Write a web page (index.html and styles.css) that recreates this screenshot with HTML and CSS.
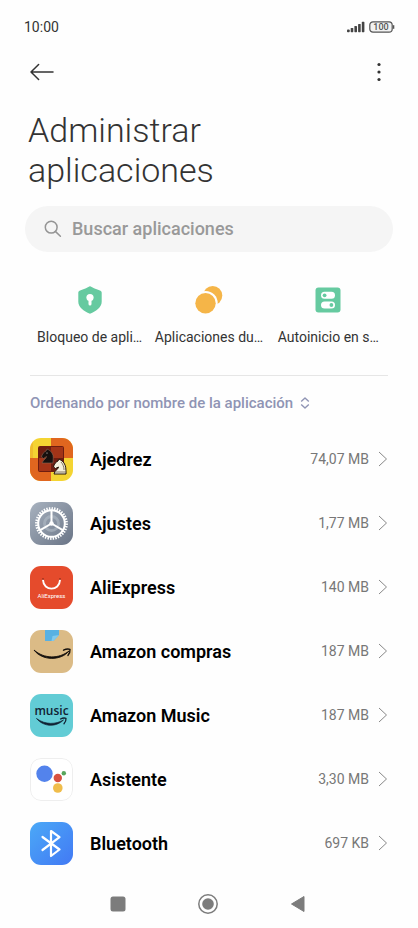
FILE: index.html
```html
<!DOCTYPE html>
<html lang="es">
<head>
<meta charset="utf-8">
<meta name="viewport" content="width=device-width, initial-scale=1">
<title>Administrar aplicaciones</title>
<link rel="stylesheet" href="styles.css">
</head>
<body>
<div class="screen">
  <div class="status">
    <time>10:00</time>
    <div class="status-icons">
      <svg width="18" height="12" viewBox="0 0 18 12" fill="#444" aria-hidden="true"><rect x="0" y="8.5" width="2.700" height="2.700" rx=".8"/><rect x="3.700" y="7" width="2.600" height="4.200" rx=".6"/><rect x="7.400" y="5" width="2.600" height="6.200" rx=".6"/><rect x="11.100" y="3" width="2.600" height="8.200" rx=".6"/><rect x="14.800" y=".8" width="2.600" height="10.400" rx=".6"/></svg>
      <svg width="26" height="12" viewBox="0 0 26 12" aria-hidden="true"><rect x=".8" y=".8" width="22.400" height="10.400" rx="3.200" fill="#f2f2f2" stroke="#555" stroke-width="1.200"/><path d="M24.600 4.200v3.600" stroke="#555" stroke-width="1.400"/><text class="charge" x="12" y="9.200" text-anchor="middle">100</text></svg>
    </div>
  </div>

  <header class="toolbar">
    <button type="button" aria-label="Atrás"><svg width="24" height="18" viewBox="0 0 24 18" fill="none" stroke="#333" stroke-width="1.500" stroke-linecap="round" stroke-linejoin="round"><path d="M23 9H1M8.600 1.500 1 9l7.600 7.500"/></svg></button>
    <button type="button" aria-label="Más opciones"><svg width="4" height="20" viewBox="0 0 4 20" fill="#333"><circle cx="2" cy="2.500" r="1.600"/><circle cx="2" cy="10" r="1.600"/><circle cx="2" cy="17.500" r="1.600"/></svg></button>
  </header>

  <main>
    <h1>Administrar aplicaciones</h1>

    <label class="search">
      <svg width="18" height="18" viewBox="0 0 18 18" fill="none" stroke="#959595" stroke-width="1.500" stroke-linecap="round" aria-hidden="true"><circle cx="7.200" cy="7.200" r="5.900"/><path d="m11.600 11.600 4.800 4.600"/></svg>
      <input type="search" placeholder="Buscar aplicaciones" aria-label="Buscar aplicaciones">
    </label>

    <nav class="shortcuts">
      <a href="#"><svg width="28" height="28" viewBox="0 0 28 28"><path d="M14 .3c1 0 2 1 4 2l6 2.200c1.200.500 1.700 1.100 1.700 2.300v9c0 5.500-5.300 9.300-11.700 12-6.400-2.700-11.700-6.500-11.700-12v-9c0-1.200.5-1.800 1.700-2.300l6-2.200c2-1 3-2 4-2z" fill="#66caa0"/><circle cx="14" cy="11.500" r="3.600" fill="#fff"/><path d="M14 12v6" stroke="#fff" stroke-width="3" stroke-linecap="round"/></svg><span>Bloqueo de apli…</span></a>
      <a href="#"><svg width="28" height="28" viewBox="0 0 28 28"><circle cx="17.700" cy="9.600" r="9.600" fill="#f5b548"/><circle cx="10.700" cy="17" r="12" fill="#fefefe"/><circle cx="10.500" cy="17.200" r="10.200" fill="#f5b548"/></svg><span>Aplicaciones du…</span></a>
      <a href="#"><svg width="28" height="28" viewBox="0 0 28 28"><rect x="1.500" y="1.500" width="25" height="25" rx="3" fill="#66caa0"/><rect x="7" y="5.800" width="14" height="7" rx="3.500" fill="#fff"/><rect x="7" y="15.500" width="14" height="7" rx="3.500" fill="#fff"/><circle cx="10.600" cy="9.300" r="1.900" fill="#66caa0"/><circle cx="17.400" cy="19" r="1.900" fill="#66caa0"/></svg><span>Autoinicio en s…</span></a>
    </nav>

    <button type="button" class="sort">Ordenando por nombre de la aplicación <svg width="10" height="12" viewBox="0 0 10 12" fill="none" stroke="#8f94b4" stroke-width="1.400" stroke-linejoin="round" aria-hidden="true"><path d="M1.200 4.500 5 1l3.800 3.500M1.200 7.500 5 11l3.800-3.500"/></svg></button>

    <ul class="apps">
      <li><a href="#">
        <svg class="icon" viewBox="0 0 43 43" aria-hidden="true"><path fill="#f4d432" d="M0 0h43v43H0z"/><path fill="#e0661f" d="M21 0h22v20H21zM0 20h21v23H0z"/><path fill="#e0661f" d="M0 0h3v20H0z" opacity=".2"/><rect x="8" y="8" width="26" height="26" rx="2" fill="#6e1d10"/><path fill="#a33418" d="M21 9h12v11H21zM9 20h12v13H9z"/><path d="M12 25h11c0-4 1-7-1-10-1-2-3-3-5-4l-1 2c-2 1-4 3-4.500 6l2 1.500 3-2c0 2-3 3-4.500 6.500z" fill="#17100e" stroke="#8b6955" stroke-width=".6"/><circle cx="17" cy="15" r=".6" fill="#ddd"/><path d="M24 36h12c0-5 0-8-2-11-1-2-3-2.500-5-4l-1 2c-2 1-4 3-4.500 6l2 1.500 3-1.500c0 2-4 3.500-4.500 7z" fill="#f4efdc" stroke="#24150b" stroke-width="1"/><path d="M25 34h10M31 24c2 2 3 5 3 8" stroke="#6a5b43" stroke-width=".8" fill="none"/></svg>
        <span class="name">Ajedrez</span><span class="size">74,07 MB</span>
        <svg class="chevron" viewBox="0 0 10 16"><path d="m1 1 7.500 7L1 15"/></svg></a></li>
      <li><a href="#">
        <svg class="icon" viewBox="0 0 43 43" aria-hidden="true"><defs><linearGradient id="steel" x2="1" y2="1"><stop stop-color="#a8b2bf"/><stop offset="1" stop-color="#697486"/></linearGradient></defs><path fill="url(#steel)" d="M0 0h43v43H0z"/><circle cx="21.500" cy="21.500" r="7" fill="none" stroke="#b8c1cc" stroke-width="3" opacity=".5"/><g fill="none" stroke="#fff"><circle cx="21.500" cy="21.500" r="13.300" stroke-width="2"/><circle cx="21.500" cy="21.500" r="15" stroke-width="2.800" pathLength="72" stroke-dasharray="1.100 .9"/><path d="M21.500 21.500V8M21.500 21.500l-11.700 6.800M21.500 21.500l11.700 6.800" stroke-width="2"/></g><circle cx="21.500" cy="21.500" r="2.200" fill="#fff"/></svg>
        <span class="name">Ajustes</span><span class="size">1,77 MB</span>
        <svg class="chevron" viewBox="0 0 10 16"><path d="m1 1 7.500 7L1 15"/></svg></a></li>
      <li><a href="#">
        <svg class="icon" viewBox="0 0 43 43" aria-hidden="true"><path fill="#e54b2c" d="M0 0h43v43H0z"/><path d="M13 14c.5 11.500 16.500 11.500 17 0" fill="none" stroke="#fff" stroke-width="1.900" stroke-linecap="round"/><circle cx="13" cy="13" r="1.100" fill="#a9321c"/><circle cx="30" cy="13" r="1.100" fill="#a9321c"/><text class="ali" x="21.500" y="31.500" text-anchor="middle">AliExpress</text></svg>
        <span class="name">AliExpress</span><span class="size">140 MB</span>
        <svg class="chevron" viewBox="0 0 10 16"><path d="m1 1 7.500 7L1 15"/></svg></a></li>
      <li><a href="#">
        <svg class="icon" viewBox="0 0 43 43" aria-hidden="true"><path fill="#dbbb86" d="M0 0h43v43H0z"/><path fill="#59b1e2" d="M15 0h14v5l-5.500 6H15z"/><path fill="#83caed" d="m21.500 11 1-5 6.500-1-5.500 6z"/><path d="M4 20c10 9 25 9 35 1-8 10-27 10-35-1z" fill="#15110d" stroke="#15110d" stroke-width=".9" stroke-linejoin="round"/><path d="M33.500 20.200c2.500-1.200 5-1.300 6.500-.8.200 2-.7 4.300-2 6" fill="none" stroke="#15110d" stroke-width="1.400" stroke-linecap="round" stroke-linejoin="round"/></svg>
        <span class="name">Amazon compras</span><span class="size">187 MB</span>
        <svg class="chevron" viewBox="0 0 10 16"><path d="m1 1 7.500 7L1 15"/></svg></a></li>
      <li><a href="#">
        <svg class="icon" viewBox="0 0 43 43" aria-hidden="true"><path fill="#62ccd5" d="M0 0h43v43H0z"/><text class="music" x="21.500" y="21" text-anchor="middle">music</text><path d="M6.500 24.500c9 6.500 19 6 27 1.500-7 7-19.500 7.500-27-1.500z" fill="#123" stroke="#123" stroke-width=".7" stroke-linejoin="round"/><path d="M30.500 25c2-1 4-1.200 5.500-.7.200 2-.6 4-2 5.500" fill="none" stroke="#123" stroke-width="1.300" stroke-linecap="round" stroke-linejoin="round"/></svg>
        <span class="name">Amazon Music</span><span class="size">187 MB</span>
        <svg class="chevron" viewBox="0 0 10 16"><path d="m1 1 7.500 7L1 15"/></svg></a></li>
      <li><a href="#">
        <svg class="icon" viewBox="0 0 43 43" aria-hidden="true"><rect x=".5" y=".5" width="42" height="42" rx="10.500" fill="#fff" stroke="#eee"/><circle cx="14.500" cy="15.800" r="8.200" fill="#5383ec"/><circle cx="27.800" cy="20" r="4.200" fill="#d85140"/><circle cx="33.800" cy="15.300" r="2.200" fill="#58a65c"/><circle cx="27.800" cy="30" r="4.800" fill="#f0bd4b"/></svg>
        <span class="name">Asistente</span><span class="size">3,30 MB</span>
        <svg class="chevron" viewBox="0 0 10 16"><path d="m1 1 7.500 7L1 15"/></svg></a></li>
      <li><a href="#">
        <svg class="icon" viewBox="0 0 43 43" aria-hidden="true"><defs><linearGradient id="blue" x2="1" y2="1"><stop stop-color="#4ba9f7"/><stop offset="1" stop-color="#4279f4"/></linearGradient></defs><path fill="url(#blue)" d="M0 0h43v43H0z"/><path d="m12.500 15 17 12.500-8.500 6.500V9l8.500 6.200-17 12.800" fill="none" stroke="#fff" stroke-width="2.200" stroke-linecap="round" stroke-linejoin="round"/></svg>
        <span class="name">Bluetooth</span><span class="size">697 KB</span>
        <svg class="chevron" viewBox="0 0 10 16"><path d="m1 1 7.500 7L1 15"/></svg></a></li>
    </ul>
  </main>

  <footer class="system">
    <button type="button" aria-label="Recientes"><svg width="22" height="22" viewBox="0 0 22 22"><rect x="3.500" y="3.500" width="15" height="15" rx="2.500" fill="#7c7c7c"/></svg></button>
    <button type="button" aria-label="Inicio"><svg width="22" height="22" viewBox="0 0 22 22"><circle cx="11" cy="11" r="9.200" fill="none" stroke="#7c7c7c" stroke-width="1.500"/><circle cx="11" cy="11" r="5.800" fill="#7c7c7c"/></svg></button>
    <button type="button" aria-label="Volver"><svg width="22" height="22" viewBox="0 0 22 22"><path d="M17 3.500v15L4.500 11z" fill="#7c7c7c" stroke="#7c7c7c" stroke-linejoin="round"/></svg></button>
  </footer>
</div>
</body>
</html>
```
FILE: styles.css
```css
* { box-sizing: border-box; }

body {
  margin: 0;
  background: #fefefe;
  color: #333;
  font-family: Roboto, "Liberation Sans", sans-serif;
}

button {
  display: flex;
  align-items: center;
  padding: 0;
  border: 0;
  background: none;
  font: inherit;
}

a {
  color: inherit;
  text-decoration: none;
}

.screen {
  display: flex;
  flex-direction: column;
  min-height: 100vh;
}

.status {
  display: flex;
  justify-content: space-between;
  align-items: center;
  height: 54px;
  padding: 0 23px 0 24px;
  font-size: 14px;
}

.status-icons {
  display: flex;
  gap: 4px;
}

.charge {
  font-size: 9px;
  font-weight: 500;
  fill: #555;
}

.toolbar {
  display: flex;
  justify-content: space-between;
  height: 36px;
  padding: 0 37px 0 30px;
}

main { flex: 1; }

h1 {
  max-width: 300px;
  margin: 20px 28px 16px;
  font-size: 34px;
  font-weight: 300;
  line-height: 40px;
}

.search {
  display: flex;
  align-items: center;
  gap: 10px;
  height: 46px;
  margin: 0 25px;
  padding: 0 19px;
  border-radius: 23px;
  background: #f5f5f5;
}

.search input {
  flex: 1;
  min-width: 0;
  padding: 0;
  border: 0;
  outline: 0;
  background: none;
  font: 500 18px/24px Roboto, sans-serif;
}

.search input::placeholder {
  color: #999;
  opacity: 1;
}

.shortcuts {
  display: grid;
  grid-template-columns: repeat(3, 1fr);
  margin: 0 30px;
  padding: 34px 0 28px;
  border-bottom: 1px solid #e6e6e6;
}

.shortcuts a {
  display: flex;
  flex-direction: column;
  align-items: center;
  gap: 13px;
  font-size: 14px;
  line-height: 20px;
  white-space: nowrap;
}

.sort {
  gap: 7px;
  margin: 17px 30px 14px;
  color: #8f94b4;
  font-size: 15px;
  font-weight: 500;
  line-height: 20px;
}

.apps {
  margin: 0;
  padding: 0;
  list-style: none;
}

.apps a {
  display: flex;
  align-items: center;
  height: 64px;
  padding: 0 30px;
}

.icon {
  width: 43px;
  height: 43px;
  margin-right: 17px;
  border-radius: 11px;
}

.name {
  flex: 1;
  color: #000;
  font-size: 18px;
  font-weight: 600;
}

.size {
  margin-right: 9px;
  color: #777;
  font-size: 14px;
}

.chevron {
  width: 10px;
  height: 16px;
  fill: none;
  stroke: #888;
  stroke-width: 1;
}

.ali {
  font-size: 6px;
  fill: #fff;
}

.music {
  font: 600 12px "Open Sans", sans-serif;
  fill: #123;
}

.system {
  display: flex;
  justify-content: center;
  gap: 68px;
  padding: 18px 2px 13px 0;
}
```
